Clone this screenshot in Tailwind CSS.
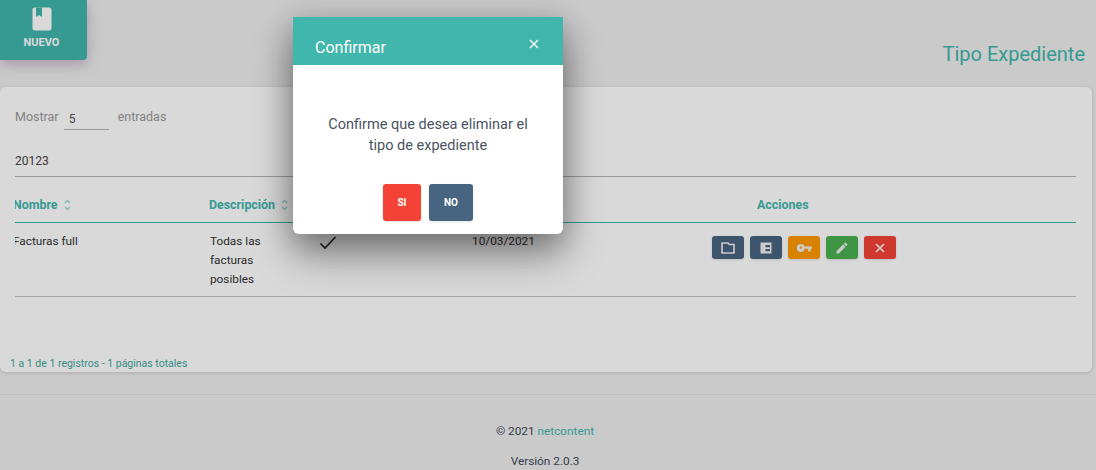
<!DOCTYPE html>
<html lang="es">
<head>
    <meta charset="UTF-8" />
    <meta name="viewport" content="width=device-width, initial-scale=1.0" />
    <title>Tipo Expediente</title>
    <script src="https://cdn.jsdelivr.net/npm/@tailwindcss/browser@4"></script>
</head>
<body class="relative h-[470px] overflow-hidden bg-[#eeeeee] font-['Roboto',sans-serif] text-[12px] text-[#3c4858]">

    <!-- page -->
    <div class="flex h-[87px] items-start justify-between pr-[11px]">
        <button class="flex h-[60px] w-[87px] flex-col items-center rounded-br-[4px] bg-[#41b6ac] pr-[4px] pt-[7px] shadow-[0_4px_18px_rgba(0,0,0,0.14),0_4px_10px_rgba(156,39,176,0.15)]">
            <svg class="h-[24px] w-[20px]" viewBox="0 0 20 24">
                <path fill="#ffffff" d="M3 0.5h14a2.5 2.5 0 0 1 2.5 2.5v18a2.5 2.5 0 0 1-2.5 2.5H3A2.5 2.5 0 0 1 .5 21V3A2.5 2.5 0 0 1 3 .5z" />
                <path fill="#41b6ac" d="M4 .5h6v9.5l-3-2-3 2z" />
            </svg>
            <span class="mt-[5px] text-[11px] leading-[13px] font-bold text-white">NUEVO</span>
        </button>
        <h2 class="mt-[41px] text-[20px] leading-[26px] text-[#41b6ac]">Tipo Expediente</h2>
    </div>

    <main class="ml-0 mr-[4px] h-[285px] rounded-[6px] bg-white px-[15px] shadow-[0_1px_4px_rgba(0,0,0,0.14)]">
        <div class="flex h-[43px] items-end text-[#999999]">
            <span class="mb-[5px] text-[12.5px] leading-[16px]">Mostrar</span>
            <span class="ml-[5px] h-[24px] w-[45px] border-b border-[#b5b5b5] pl-[5px] pt-[5px] text-[12px] leading-[16px] text-[#555555]">5</span>
            <span class="mb-[5px] ml-[9px] text-[12.5px] leading-[16px]">entradas</span>
        </div>
        <div class="mt-[19px] mr-[1px] h-[28px] border-b border-[#b5b5b5] pt-[4px] text-[12px] leading-[16px] text-[#444444]">20123</div>

        <div class="mr-[1px] overflow-hidden">
            <div class="-ml-[2px] grid h-[46px] grid-cols-[196px_110px_153px_1fr] items-center border-b border-[#35b5a9] pt-[12px] text-[12.4px] font-bold text-[#41b6ac]">
                <div class="flex items-center gap-[6px]">Nombre
                    <svg class="h-[12px] w-[7px] opacity-50" viewBox="0 0 7 12" fill="none" stroke="#41b6ac" stroke-width="1.5"><path d="M1 4l2.5-2.5L6 4M1 8l2.5 2.5L6 8" /></svg>
                </div>
                <div class="flex items-center gap-[6px]">Descripción
                    <svg class="h-[12px] w-[7px] opacity-50" viewBox="0 0 7 12" fill="none" stroke="#41b6ac" stroke-width="1.5"><path d="M1 4l2.5-2.5L6 4M1 8l2.5 2.5L6 8" /></svg>
                </div>
                <div></div>
                <div class="pl-[285px]">Acciones</div>
            </div>
            <div class="-ml-[2px] grid h-[74px] grid-cols-[196px_110px_153px_1fr] border-b border-[#c4c4c4] pt-[10px] text-[11.8px] leading-[19px] text-[#333333]">
                <div class="-mt-[1px]">Facturas full</div>
                <div class="pl-[1px] -mt-[1px]">Todas las<br />facturas<br />posibles</div>
                <div>
                    <svg class="mt-[2px] h-[15px] w-[18px]" viewBox="0 0 18 15" fill="none" stroke="#222222" stroke-width="1.6"><path d="M1.500 8.500l4.500 4.500L16.500 2" /></svg>
                </div>
                <div class="relative">
                    <span class="-mt-[1px] block">10/03/2021</span>
                    <div class="absolute left-[240px] top-[3px] flex gap-[6px]">
                        <button class="flex h-[23px] w-[32px] items-center justify-center rounded-[3px] bg-[#476481] shadow-sm">
                            <svg class="h-[12px] w-[14px]" viewBox="0 0 14 12" fill="none" stroke="#f0f0f0" stroke-width="1.6"><path d="M1 1h6l1.500 1.500H13v8.500H1z" /></svg>
                        </button>
                        <button class="flex h-[23px] w-[32px] items-center justify-center rounded-[3px] bg-[#476481] shadow-sm">
                            <svg class="h-[12px] w-[12px]" viewBox="0 0 12 12"><path fill="#f0f0f0" fill-rule="evenodd" d="M.500 .500h11v11H.500zM5.500 3v2.200H10V3zM5.500 7v2.200H10V7z" /></svg>
                        </button>
                        <button class="flex h-[23px] w-[32px] items-center justify-center rounded-[3px] bg-[#ff9800] shadow-sm">
                            <svg class="h-[10px] w-[15px]" viewBox="0 0 15 10"><path fill="#f0f0f0" fill-rule="evenodd" d="M4 1a4 4 0 0 1 3.600 2.400H15v2.400h-1.400V8.400h-2.400V5.800H7.600A4 4 0 1 1 4 1zM4 3.400a1.200 1.200 0 1 0 0 2.400 1.200 1.200 0 0 0 0-2.400z" /></svg>
                        </button>
                        <button class="flex h-[23px] w-[32px] items-center justify-center rounded-[3px] bg-[#4caf50] shadow-sm">
                            <svg class="h-[12px] w-[12px]" viewBox="0 0 12 12"><path fill="#f0f0f0" d="M0.500 9.200V11.500h2.300l6.600-6.600-2.300-2.300zM11.200 3.100a.6.6 0 0 0 0-.9L9.800.8a.6.6 0 0 0-.9 0L7.800 1.900l2.300 2.300z" /></svg>
                        </button>
                        <button class="flex h-[23px] w-[32px] items-center justify-center rounded-[3px] bg-[#f44336] shadow-sm">
                            <svg class="h-[10px] w-[10px]" viewBox="0 0 10 10" fill="none" stroke="#f4f4f4" stroke-width="1.7"><path d="M1 1l8 8M9 1l-8 8" /></svg>
                        </button>
                    </div>
                </div>
            </div>
        </div>
        <p class="-ml-[5px] mt-[60px] text-[10.5px] leading-[14px] text-[#41a69c]">1 a 1 de 1 registros - 1 páginas totales</p>
    </main>

    <footer class="mt-[22px] border-t border-[#e2e2e2] pr-[6px] text-center text-[11.8px] leading-[16px]">
        <p class="mt-[28px]">© 2021 <span class="text-[#41b6ac]">netcontent</span></p>
        <p class="mt-[14px]">Versión 2.0.3</p>
    </footer>

    <!-- dialog -->
    <div class="absolute inset-0 bg-black/15"></div>
    <div class="absolute left-[293px] top-[17px] w-[270px] overflow-hidden rounded-b-[6px] bg-white shadow-[0_20px_40px_rgba(0,0,0,0.4),0_6px_30px_rgba(0,0,0,0.2)]">
        <div class="flex h-[48px] items-start justify-between bg-[#41b6ac] pl-[22px] pr-[24px] text-white">
            <h3 class="mt-[21px] text-[16px] leading-[20px]">Confirmar</h3>
            <svg class="mt-[22px] h-[10px] w-[10px]" viewBox="0 0 10 10" fill="none" stroke="#ffffff" stroke-width="1.4"><path d="M1 1l8 8M9 1l-8 8" /></svg>
        </div>
        <p class="mx-auto mt-[49px] w-[210px] text-center text-[14.5px] leading-[21px] text-[#4a5361]">Confirme que desea eliminar el tipo de expediente</p>
        <div class="mt-[28px] flex h-[50px] justify-center gap-[8px]">
            <button class="h-[37px] w-[38px] rounded-[3px] bg-[#f44336] text-[10px] font-bold text-white shadow-sm">SI</button>
            <button class="h-[37px] w-[44px] rounded-[3px] bg-[#476481] text-[10px] font-bold text-white shadow-sm">NO</button>
        </div>
    </div>
</body>
</html>
